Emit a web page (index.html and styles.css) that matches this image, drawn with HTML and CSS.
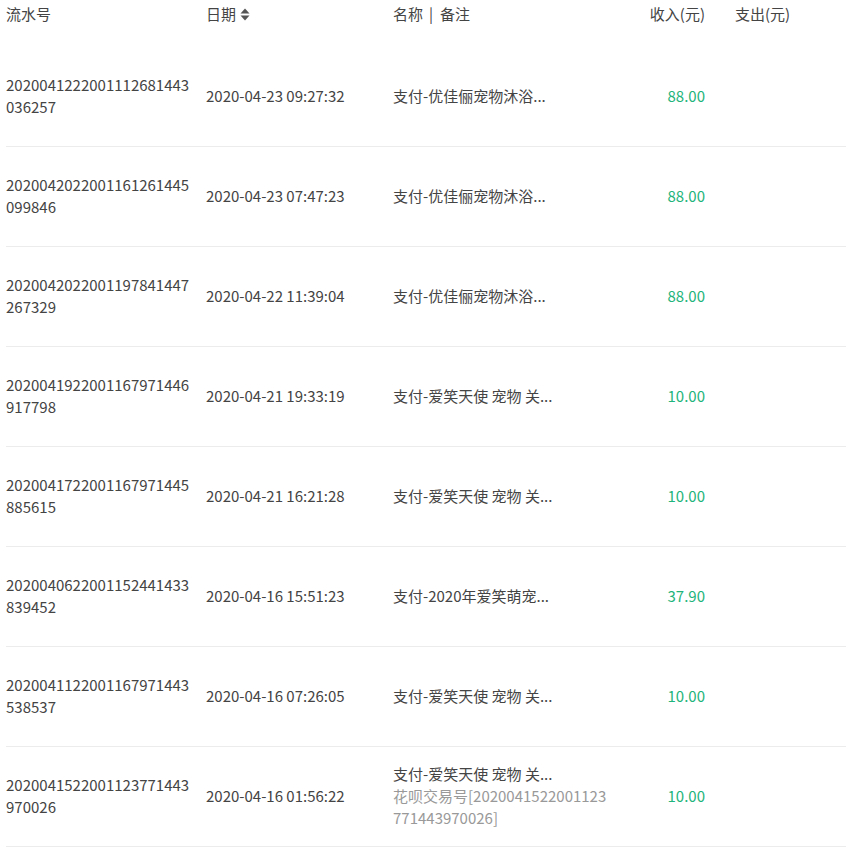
FILE: index.html
```html
<!DOCTYPE html>
<html lang="zh">
<head>
<meta charset="utf-8">
<link rel="stylesheet" href="styles.css">
</head>
<body>
<div class="wrap">
<table class="bill">
  <colgroup>
    <col class="c-no"><col class="c-date"><col class="c-name"><col class="c-in"><col class="c-out">
  </colgroup>
  <thead>
    <tr>
      <th class="t-no">流水号</th>
      <th class="t-date">日期<svg class="sort" width="10" height="13" viewBox="0 0 10 13"><path d="M5 0.5 L9.5 5.5 H0.5 Z" fill="#555"/><path d="M5 12.5 L9.5 7.5 H0.5 Z" fill="#555"/></svg></th>
      <th class="t-name">名称<span class="sep">|</span>备注</th>
      <th class="t-in">收入(元)</th>
      <th class="t-out">支出(元)</th>
    </tr>
  </thead>
  <tbody>
    <tr><td class="no">2020041222001112681443036257</td><td>2020-04-23 09:27:32</td><td>支付-优佳俪宠物沐浴...</td><td class="in">88.00</td><td></td></tr>
    <tr><td class="no">2020042022001161261445099846</td><td>2020-04-23 07:47:23</td><td>支付-优佳俪宠物沐浴...</td><td class="in">88.00</td><td></td></tr>
    <tr><td class="no">2020042022001197841447267329</td><td>2020-04-22 11:39:04</td><td>支付-优佳俪宠物沐浴...</td><td class="in">88.00</td><td></td></tr>
    <tr><td class="no">2020041922001167971446917798</td><td>2020-04-21 19:33:19</td><td>支付-爱笑天使 宠物 关...</td><td class="in">10.00</td><td></td></tr>
    <tr><td class="no">2020041722001167971445885615</td><td>2020-04-21 16:21:28</td><td>支付-爱笑天使 宠物 关...</td><td class="in">10.00</td><td></td></tr>
    <tr><td class="no">2020040622001152441433839452</td><td>2020-04-16 15:51:23</td><td>支付-2020年爱笑萌宠...</td><td class="in">37.90</td><td></td></tr>
    <tr><td class="no">2020041122001167971443538537</td><td>2020-04-16 07:26:05</td><td>支付-爱笑天使 宠物 关...</td><td class="in">10.00</td><td></td></tr>
    <tr><td class="no">2020041522001123771443970026</td><td>2020-04-16 01:56:22</td><td>支付-爱笑天使 宠物 关...<div class="memo">花呗交易号[2020041522001123771443970026]</div></td><td class="in">10.00</td><td></td></tr>
  </tbody>
</table>
</div>
</body>
</html>
```

FILE: styles.css
```css
html, body {
  margin: 0;
  padding: 0;
  background: #fff;
}
.wrap {
  padding-left: 6px;
}
.bill {
  width: 840px;
  border-collapse: collapse;
  table-layout: fixed;
  font-family: "Noto Sans CJK SC", "Microsoft YaHei", sans-serif;
  font-size: 15px;
  line-height: 22px;
  color: #444;
}
.c-no { width: 200px; }
.c-date { width: 187px; }
.c-name { width: 230px; }
.c-in { width: 82px; }
.c-out { width: 141px; }
.bill thead tr {
  height: 46px;
  border-bottom: 1px solid transparent;
  border-image: linear-gradient(to right, #b6dbb3, #cdbff0 50%, #d6c8fb) 1;
}
.bill th {
  font-weight: normal;
  text-align: left;
  vertical-align: top;
  padding: 3px 0 0 0;
}
.bill th.t-in {
  text-align: right;
}
.bill th.t-out {
  padding-left: 30px;
}
.sep {
  margin: 0 7px 0 6px;
}
.sort {
  vertical-align: -1px;
  margin-left: 4px;
}
.bill tbody tr {
  height: 100px;
  border-bottom: 1px solid #ececec;
}
.bill td {
  padding: 0 14px 0 0;
  vertical-align: middle;
  word-break: break-all;
}
.bill td.in {
  text-align: right;
  padding-right: 0;
  color: #1eb47b;
}
.memo {
  color: #999;
}
```
